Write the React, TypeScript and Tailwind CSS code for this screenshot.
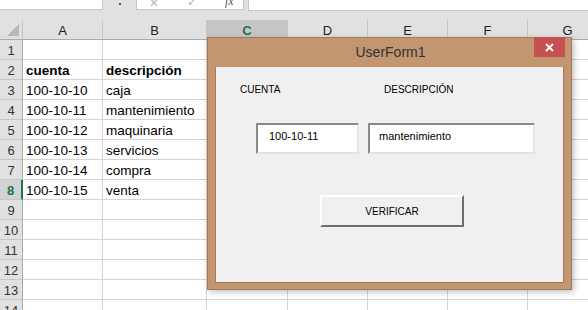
import React from "react";

const cols = [
  { name: "A", w: "w-[80px]" },
  { name: "B", w: "w-[104px]" },
  { name: "C", w: "w-[81px]" },
  { name: "D", w: "w-[80px]" },
  { name: "E", w: "w-[80px]" },
  { name: "F", w: "w-[80px]" },
  { name: "G", w: "w-[80px]" },
];

const data: Record<number, [string, string, boolean?]> = {
  2: ["cuenta", "descripción", true],
  3: ["100-10-10", "caja"],
  4: ["100-10-11", "mantenimiento"],
  5: ["100-10-12", "maquinaria"],
  6: ["100-10-13", "servicios"],
  7: ["100-10-14", "compra"],
  8: ["100-10-15", "venta"],
};

const rows = Array.from({ length: 14 }, (_, i) => i + 1);

const UserForm = () => {
  return (
    <div className="absolute left-[207px] top-[37px] w-[365px] h-[253px] bg-[#c19670] border border-[#a27a55] shadow-[2px_2px_6px_rgba(0,0,0,0.25)] flex flex-col">
      <div className="relative h-[29px] flex items-center justify-center">
        <span className="text-[14px] text-[#333] font-['Liberation_Sans',sans-serif] pl-[2px]">UserForm1</span>
        <div className="absolute right-[6px] -top-[1px] w-[31px] h-[20px] bg-[#c75050] flex items-center justify-center">
          <svg width="9" height="9" viewBox="0 0 9 9">
            <path d="M1 1 L8 8 M8 1 L1 8" stroke="white" strokeWidth="1.8" />
          </svg>
        </div>
      </div>
      <div className="flex-1 mx-[7px] mb-[6px] bg-[#f0f0f0] border border-[#a27a55] border-t-0 flex flex-col font-['Liberation_Sans',sans-serif] text-black">
        <div className="flex pl-[24px] pt-[16px] text-[10px] leading-[14px]">
          <span className="w-[144px]">CUENTA</span>
          <span>DESCRIPCIÓN</span>
        </div>
        <div className="flex pl-[40px] pt-[26px] gap-[9px]">
          <div className="w-[103px] h-[31px] bg-white border-2 border-t-[#8a8a8a] border-l-[#8a8a8a] border-b-[#e3e3e3] border-r-[#e3e3e3] pl-[11px] pt-[3px] text-[11px] leading-[16px]">
            100-10-11
          </div>
          <div className="w-[167px] h-[31px] bg-white border-2 border-t-[#8a8a8a] border-l-[#8a8a8a] border-b-[#e3e3e3] border-r-[#e3e3e3] pl-[9px] pt-[3px] text-[11px] leading-[16px]">
            mantenimiento
          </div>
        </div>
        <div className="flex pl-[104px] pt-[41px]">
          <div className="w-[144px] h-[32px] bg-[#f0f0f0] border-2 border-t-white border-l-white border-b-[#6e6e6e] border-r-[#6e6e6e] flex items-center justify-center text-[10px]">
            VERIFICAR
          </div>
        </div>
      </div>
    </div>
  );
};

export default function App() {
  return (
    <div className="relative w-[588px] h-[310px] overflow-hidden bg-white font-['Liberation_Sans',sans-serif]">
      {/* formula bar */}
      <div className="h-[20px] bg-[#e1e1e1] flex items-start">
        <div className="w-[103px] shrink-0 h-[10px] bg-white border-b border-r border-[#c6c6c6]" />
        <div className="w-[33px] shrink-0 h-[10px] flex justify-center">
          <div className="w-[2px] h-[2px] bg-[#555] mt-[3px]" />
        </div>
        <div className="w-[108px] shrink-0 h-[10px] bg-white border-b border-x border-[#c6c6c6] relative overflow-hidden">
          <span className="absolute left-[12px] -top-[6px] text-[#b8b8b8] text-[12px]">✕</span>
          <span className="absolute left-[50px] -top-[7px] text-[#b8b8b8] text-[12px]">✓</span>
          <span className="absolute left-[88px] -top-[8px] text-[#555] text-[12px] italic font-['Liberation_Serif',serif]">fx</span>
        </div>
        <div className="ml-[4px] flex-1 h-[11px] bg-white border-b border-l border-[#c6c6c6]" />
      </div>
      {/* column headers */}
      <div className="flex h-[20px] bg-[#e1e1e1] border-b border-[#ababab] text-[13px] text-[#222]">
        <div className="w-[23px] shrink-0 border-r border-[#c6c6c6] relative">
          <div className="absolute right-[3px] bottom-[3px] w-0 h-0 border-l-[12px] border-l-transparent border-b-[12px] border-b-[#b8b8b8]" />
        </div>
        {cols.map((c) => (
          <div
            key={c.name}
            className={`${c.w} shrink-0 border-r border-[#c6c6c6] text-center leading-[16px] pt-[3px] ${
              c.name === "C" ? "bg-[#c6c6c6] text-[#217346] font-bold" : ""
            }`}
          >
            {c.name}
          </div>
        ))}
      </div>
      {/* grid */}
      {rows.map((r) => {
        const d = data[r];
        return (
          <div key={r} className="flex h-[20px]">
            <div
              className={`w-[23px] shrink-0 border-b border-[#c6c6c6] text-center text-[13px] leading-[16px] pt-[3px] ${
                r === 8
                  ? "bg-[#d2d2d2] text-[#217346] font-bold border-r-2 border-r-[#217346]"
                  : "bg-[#e1e1e1] text-[#333] border-r border-r-[#ababab]"
              }`}
            >
              {r}
            </div>
            {cols.map((c, ci) => (
              <div
                key={c.name}
                className={`${c.w} shrink-0 border-r border-b border-[#d4d4d4] pl-[3px] pt-[2px] text-[13.5px] leading-[17px] text-black whitespace-nowrap ${
                  d && d[2] ? "font-bold" : ""
                } ${r === 8 && ci === 2 ? "border-l-2 border-l-[#217346]" : ""}`}
              >
                {d && ci < 2 ? d[ci] : ""}
              </div>
            ))}
          </div>
        );
      })}
      <UserForm />
    </div>
  );
}
